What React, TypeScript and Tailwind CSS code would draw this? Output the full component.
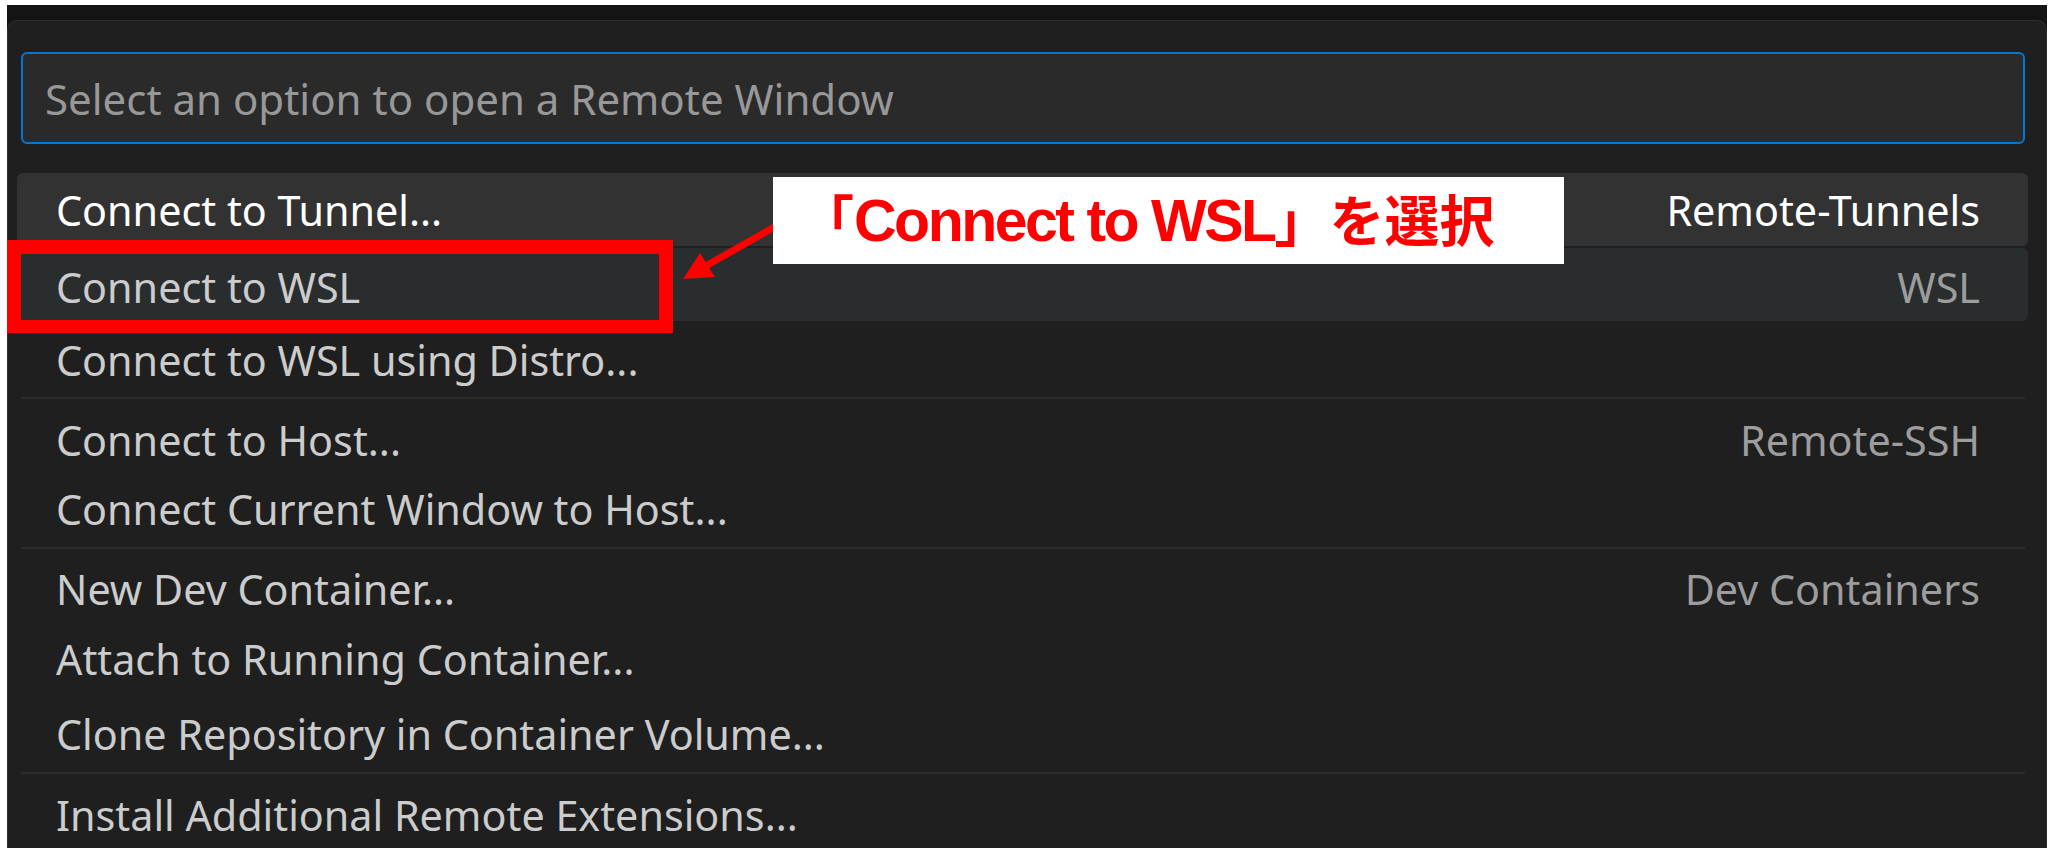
import React from "react";

type RowProps = {
  label: string;
  desc?: string;
  sep?: boolean;
  variant?: "active" | "hover" | "none";
  pad?: string;
};

function Row({ label, desc, sep, variant = "none", pad = "pt-[1px]" }: RowProps) {
  const bg =
    variant === "active"
      ? "bg-[#323232]"
      : variant === "hover"
      ? "bg-[#2a2d2e]"
      : "";
  const labelColor = variant === "active" ? "text-white" : "text-[#cccccc]";
  const descColor = variant === "active" ? "text-white" : "text-[#9d9d9d]";
  return (
    <div className="flex h-[75px] flex-col">
      {sep && <div className="ml-[4px] mr-[3px] h-[2px] shrink-0 bg-[#2c2c2c]" />}
      <div
        className={`my-px flex flex-1 items-center justify-between rounded-[6px] pl-[39px] pr-[48px] ${pad} ${bg}`}
      >
        <span className={`whitespace-nowrap ${labelColor}`}>{label}</span>
        {desc && <span className={`whitespace-nowrap ${descColor}`}>{desc}</span>}
      </div>
    </div>
  );
}

export default function App() {
  return (
    <div
      className="relative h-[848px] w-[2051px] overflow-hidden bg-white"
      style={{ fontFamily: '"Noto Sans", "Open Sans", sans-serif' }}
    >
      <div className="ml-[7px] mr-[4px] mt-[5px] h-full bg-[#141414] pt-[15px]">
        <div className="h-full rounded-t-[10px] border border-b-0 border-[#2e2e2e] bg-[#1f1f1f] pt-[31px]">
          <div className="ml-[13px] mr-[21px] flex h-[92px] items-center rounded-[6px] border-2 border-[#0078d4] bg-[#2a2a2a] pl-[22px]">
            <span className="whitespace-nowrap text-[42px] text-[#989898]">
              Select an option to open a Remote Window
            </span>
          </div>
          <div className="ml-[9px] mr-[18px] mt-[28px] text-[41.3px] leading-none">
            <Row label="Connect to Tunnel..." desc="Remote-Tunnels" variant="active" pad="pt-[2px]" />
            <Row label="Connect to WSL" desc="WSL" variant="hover" pad="pt-[7px]" />
            <Row label="Connect to WSL using Distro..." pad="pt-[2px]" />
            <Row label="Connect to Host..." desc="Remote-SSH" sep pad="pt-[10px]" />
            <Row label="Connect Current Window to Host..." />
            <Row label="New Dev Container..." desc="Dev Containers" sep pad="pt-[9px]" />
            <Row label="Attach to Running Container..." />
            <Row label="Clone Repository in Container Volume..." />
            <Row label="Install Additional Remote Extensions..." sep pad="pt-[10px]" />
          </div>
        </div>
      </div>

      {/* Red highlight box */}
      <div className="pointer-events-none absolute left-[7px] top-[240px] h-[93px] w-[666px] border-[14px] border-b-[13px] border-[#ff0000]" />

      {/* Arrow */}
      <svg
        className="pointer-events-none absolute left-[670px] top-[215px]"
        width="115"
        height="75"
        viewBox="670 215 115 75"
      >
        <line x1="778" y1="225" x2="704" y2="267" stroke="#ff0000" strokeWidth="7" />
        <polygon points="683,279 700,253 715,277" fill="#ff0000" />
      </svg>

      {/* Callout */}
      <div className="absolute left-[773px] top-[177px] flex h-[87px] w-[791px] items-center bg-white pl-[27px] font-bold text-[#ff0000]">
        <span
          className="whitespace-nowrap leading-none"
          style={{ fontFamily: '"Noto Sans CJK JP", sans-serif' }}
        >
          <span className="text-[54px]">「</span>
          <span
            className="text-[59px] tracking-[-2.5px]"
            style={{ fontFamily: '"Liberation Sans", "Noto Sans CJK JP", sans-serif' }}
          >
            Connect to WSL
          </span>
          <span className="text-[55px]">」を選択</span>
        </span>
      </div>
    </div>
  );
}
